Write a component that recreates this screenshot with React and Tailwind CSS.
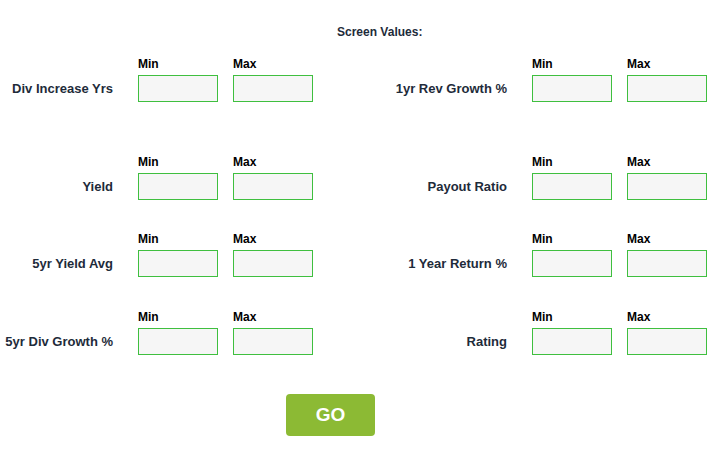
import React from "react";

function Field({ label }) {
  return (
    <div className="flex items-end">
      <div className="w-[113px] text-right text-[13px] font-bold text-[#1e2b3a] leading-[27px]">{label}</div>
      <div className="ml-[25px] flex flex-col">
        <div className="text-[12px] font-bold text-black leading-[14px] mb-[4px]">Min</div>
        <input className="w-[80px] h-[27px] border border-[#3fbf3f] bg-[#f6f6f6] outline-none" />
      </div>
      <div className="ml-[15px] flex flex-col">
        <div className="text-[12px] font-bold text-black leading-[14px] mb-[4px]">Max</div>
        <input className="w-[80px] h-[27px] border border-[#3fbf3f] bg-[#f6f6f6] outline-none" />
      </div>
    </div>
  );
}

export default function App() {
  return (
    <div className="w-[724px] h-[454px] bg-white font-['Liberation_Sans',Arial,sans-serif] flex flex-col">
      <div className="pt-[25px] pl-[337px] text-[12px] font-bold text-[#1e2b3a] leading-[14px]">Screen Values:</div>
      <div className="mt-[18px] grid grid-cols-[394px_1fr]">
        <Field label="Div Increase Yrs" />
        <Field label="1yr Rev Growth %" />
      </div>
      <div className="mt-[53px] grid grid-cols-[394px_1fr]">
        <Field label="Yield" />
        <Field label="Payout Ratio" />
      </div>
      <div className="mt-[32px] grid grid-cols-[394px_1fr]">
        <Field label="5yr Yield Avg" />
        <Field label="1 Year Return %" />
      </div>
      <div className="mt-[33px] grid grid-cols-[394px_1fr]">
        <Field label="5yr Div Growth %" />
        <Field label="Rating" />
      </div>
      <div className="mt-[39px] pl-[286px]">
        <button className="w-[89px] h-[42px] rounded-[4px] bg-[#8cba34] text-white text-[19px] font-bold">GO</button>
      </div>
    </div>
  );
}
